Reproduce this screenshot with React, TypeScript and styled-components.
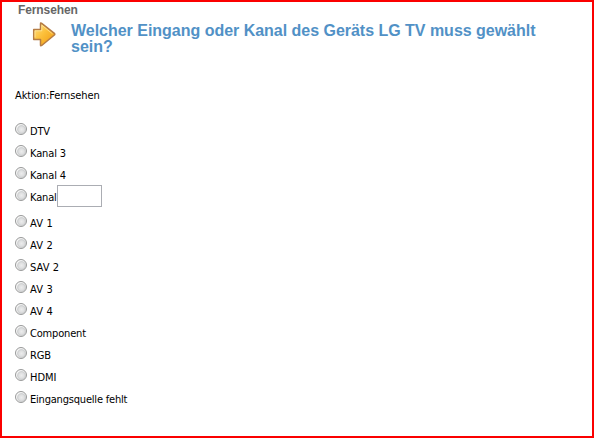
import { useState } from 'react';
import styled, { createGlobalStyle } from 'styled-components';

const GlobalStyle = createGlobalStyle`
  body{
    margin: 0;
    background: #fff;
  }
  *{
    box-sizing: border-box;
  }
`
const Page = styled.div`
  width: 594px;
  height: 438px;
  overflow: hidden;
  border: 2px solid #fb0000;
  padding-left: 13px;
  background: #fff;
  color: #000;
  font-family: "DejaVu Sans Condensed", "DejaVu Sans", sans-serif;
  font-stretch: condensed;
  font-size: 11px;
`
const Section = styled.div`
  height: 18px;
  padding-left: 3px;
  line-height: 17px;
  font-family: "Liberation Sans", Arial, sans-serif;
  font-size: 12px;
  font-weight: bold;
  letter-spacing: -0.1px;
  color: #666;
`
const Header = styled.div`
  display: flex;
  height: 69px;
  padding-left: 17px;
  >svg{
    flex: none;
    margin-top: 1px;
  }
`
const Title = styled.h1`
  width: 480px;
  margin: 3px 0 0 14px;
  font-family: "Liberation Sans", Arial, sans-serif;
  font-size: 16px;
  line-height: 16px;
  font-weight: bold;
  letter-spacing: -0.02px;
  color: #5191c6;
`
const Action = styled.div`
  height: 29px;
  line-height: 14px;
  letter-spacing: -0.08px;
`
const List = styled.div`
  display: flex;
  flex-direction: column;
`
const Row = styled.label<{ $tall?: boolean }>`
  display: flex;
  align-items: flex-start;
  height: ${p => (p.$tall ? 26 : 22)}px;
`
const Radio = styled.input`
  appearance: none;
  flex: none;
  width: 12px;
  height: 12px;
  margin: 5px 3px 0 0;
  border: 1px solid #989999;
  border-radius: 50%;
  background: radial-gradient(circle at 55% 55%, #ececec 0, #dedfe0 35%, #cccecf 50%, #f6f6f6 62%);
  &:checked{
    background: radial-gradient(circle, #1c5a80 0 30%, #f4f4f4 40%);
  }
`
const Label = styled.span<{ $spacing?: number }>`
  padding-top: 7px;
  line-height: 14px;
  white-space: nowrap;
  letter-spacing: ${p => p.$spacing ?? 0}px;
`
const ChannelInput = styled.input`
  width: 45px;
  height: 22px;
  margin-top: 1px;
  padding: 1px 3px;
  border: 1px solid #abadb3;
  border-radius: 0;
  background: #fff;
  font: inherit;
  outline: none;
`

type Option = { name: string; spacing?: number; input?: boolean }

const options: Option[] = [
  { name: 'DTV', spacing: -0.2 },
  { name: 'Kanal 3', spacing: -0.12 },
  { name: 'Kanal 4', spacing: -0.12 },
  { name: 'Kanal', spacing: -0.15, input: true },
  { name: 'AV 1', spacing: 0.2 },
  { name: 'AV 2', spacing: 0.2 },
  { name: 'SAV 2', spacing: 0.1 },
  { name: 'AV 3', spacing: 0.2 },
  { name: 'AV 4', spacing: 0.2 },
  { name: 'Component', spacing: -0.18 },
  { name: 'RGB', spacing: -0.2 },
  { name: 'HDMI' },
  { name: 'Eingangsquelle fehlt', spacing: -0.2 },
]

function Arrow() {
  return (
    <svg width="25" height="26" viewBox="0 0 25 26">
      <defs>
        <linearGradient id="arrow" x1="0" y1="0" x2="1" y2="1">
          <stop offset="0" stopColor="#ffe28c" />
          <stop offset="0.45" stopColor="#fcc13c" />
          <stop offset="1" stopColor="#ee960c" />
        </linearGradient>
      </defs>
      <path
        d="M1.7 8.5H8.5V2.9Q8.5 1.4 9.7 2.3L22.4 12.4Q23.2 13.2 22.4 14L9.7 24.5Q8.5 25.4 8.5 23.9V18.5H1.7Z"
        fill="url(#arrow)"
        stroke="#b57c45"
        strokeWidth="1.5"
        strokeLinejoin="round"
      />
      <path d="M3 16.5V9.8H9.8V4.2L20.5 12.8" fill="none" stroke="#ffe9a6" strokeOpacity="0.7" />
    </svg>
  )
}

function App() {
  const [selected, setSelected] = useState('')
  const [channel, setChannel] = useState('')
  return (
    <>
      <GlobalStyle />
      <Page>
        <Section>Fernsehen</Section>
        <Header>
          <Arrow />
          <Title>Welcher Eingang oder Kanal des Geräts LG TV muss gewählt sein?</Title>
        </Header>
        <Action>Aktion:Fernsehen</Action>
        <List>
          {options.map(({ name, spacing, input }) => (
            <Row key={name} $tall={input}>
              <Radio type="radio" name="source" checked={selected === name} onChange={() => setSelected(name)} />
              <Label $spacing={spacing}>{name}</Label>
              {input && <ChannelInput value={channel} onChange={e => setChannel(e.target.value)} />}
            </Row>
          ))}
        </List>
      </Page>
    </>
  )
}

export default App;
